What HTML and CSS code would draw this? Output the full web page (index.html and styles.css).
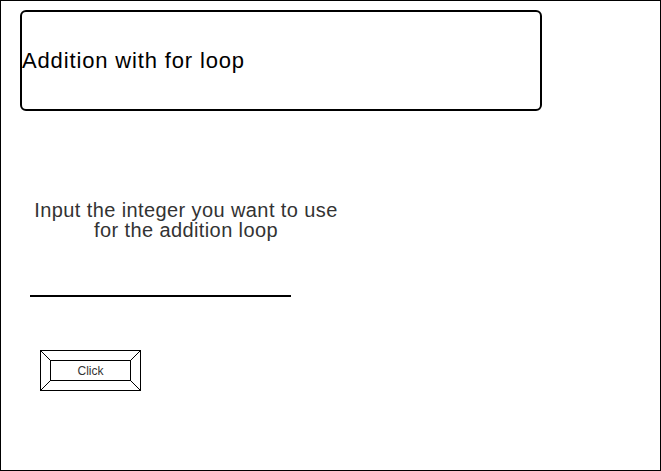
FILE: index.html
```html
<!DOCTYPE html>
<html>
<head>
<meta charset="utf-8">
<link rel="stylesheet" href="styles.css">
</head>
<body>
<div class="frame">
  <div class="title-box"><span class="title">Addition with for loop</span></div>
  <div class="prompt">Input the integer you want to use<br>for the addition loop</div>
  <div class="input-line"></div>
  <div class="button">
    <svg class="bevel" width="101" height="41" viewBox="0 0 101 41">
      <rect x="0.5" y="0.5" width="100" height="40" fill="#fff" stroke="#000" stroke-width="1"/>
      <rect x="10.5" y="10.5" width="80" height="20" fill="none" stroke="#000" stroke-width="1"/>
      <line x1="0.5" y1="0.5" x2="10.5" y2="10.5" stroke="#000"/>
      <line x1="100.5" y1="0.5" x2="90.5" y2="10.5" stroke="#000"/>
      <line x1="0.5" y1="40.5" x2="10.5" y2="30.5" stroke="#000"/>
      <line x1="100.5" y1="40.5" x2="90.5" y2="30.5" stroke="#000"/>
    </svg>
    <span class="button-label">Click</span>
  </div>
</div>
</body>
</html>
```
FILE: styles.css
```css
html, body {
  margin: 0;
  padding: 0;
  background: #fff;
}
.frame {
  box-sizing: border-box;
  width: 661px;
  height: 471px;
  border: 1px solid #000;
  font-family: "Liberation Sans", Arial, sans-serif;
  display: flex;
  flex-direction: column;
  align-items: flex-start;
}
.title-box {
  box-sizing: border-box;
  margin: 9px 0 0 19px;
  width: 522px;
  height: 101px;
  border: 2px solid #000;
  border-radius: 6px;
  display: flex;
  align-items: center;
}
.title {
  font-size: 22px;
  letter-spacing: 0.85px;
  color: #000;
  line-height: 1;
}
.prompt {
  margin: 89px 0 0 0;
  width: 370px;
  text-align: center;
  font-size: 20px;
  letter-spacing: 0.4px;
  line-height: 20px;
  color: #333;
}
.input-line {
  margin: 55px 0 0 29px;
  width: 261px;
  height: 2px;
  background: #000;
}
.button {
  position: relative;
  margin: 53px 0 0 39px;
  width: 101px;
  height: 41px;
  display: flex;
  align-items: center;
  justify-content: center;
}
.bevel {
  position: absolute;
  left: 0;
  top: 0;
}
.button-label {
  position: relative;
  font-size: 12px;
  color: #333;
}
```
